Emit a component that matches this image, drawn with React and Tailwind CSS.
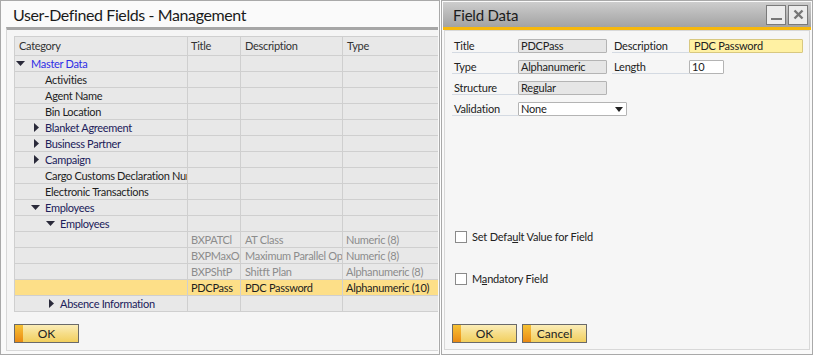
import React from "react";

const F = { fontFamily: "Lato, 'Liberation Sans', sans-serif" };

function TriDown() {
  return (
    <svg width="9" height="5" viewBox="0 0 9 5" className="block">
      <path d="M0 0 H9 L4.5 5 Z" fill="#2a2a3a" />
    </svg>
  );
}
function TriRight() {
  return (
    <svg width="5" height="9" viewBox="0 0 5 9" className="block">
      <path d="M0 0 V9 L5 4.5 Z" fill="#2a2a3a" />
    </svg>
  );
}

const rows = [
  { iconAt: 2, textAt: 17, icon: "down", text: "Master Data", color: "text-[#2d2de6]" },
  { textAt: 31, text: "Activities" },
  { textAt: 31, text: "Agent Name" },
  { textAt: 31, text: "Bin Location" },
  { iconAt: 20, textAt: 31, icon: "right", text: "Blanket Agreement", color: "text-[#20205a]" },
  { iconAt: 20, textAt: 31, icon: "right", text: "Business Partner", color: "text-[#20205a]" },
  { iconAt: 20, textAt: 31, icon: "right", text: "Campaign", color: "text-[#20205a]" },
  { textAt: 31, text: "Cargo Customs Declaration Numbers" },
  { textAt: 31, text: "Electronic Transactions" },
  { iconAt: 17, textAt: 31, icon: "down", text: "Employees", color: "text-[#20205a]" },
  { iconAt: 32, textAt: 46, icon: "down", text: "Employees", color: "text-[#20205a]" },
  { t: "BXPATCl", d: "AT Class", ty: "Numeric (8)", gray: true },
  { t: "BXPMaxOp", d: "Maximum Parallel Operations", ty: "Numeric (8)", gray: true },
  { t: "BXPShtP", d: "Shitft Plan", ty: "Alphanumeric (8)", gray: true },
  { t: "PDCPass", d: "PDC Password", ty: "Alphanumeric (10)", sel: true },
  { iconAt: 35, textAt: 46, icon: "right", text: "Absence Information", color: "text-[#20205a]" },
];

function Cell({ children, className = "" }) {
  return (
    <div className={`h-[16px] border-r border-b border-[#cfcfcf] overflow-hidden whitespace-nowrap leading-[15px] ${className}`}>
      {children}
    </div>
  );
}

function Button({ label }) {
  return (
    <div className="relative w-[65px] h-[19px] border border-[#6a6a6a] bg-gradient-to-b from-[#fbedb8] via-[#f6dd88] to-[#f2cf5c] flex items-center justify-center text-[12px] text-[#222]">
      <div className="absolute left-0 top-0 bottom-0 w-[8px] bg-gradient-to-b from-[#f6c235] to-[#ea8a12]" />
      <span className="relative">{label}</span>
    </div>
  );
}

function Label({ children, w }) {
  return (
    <div className={`h-[14px] border-b border-[#d4dae2] text-[11px] leading-[13px] text-[#222] pl-[2px] tracking-[-0.2px] ${w}`}>{children}</div>
  );
}

function Field({ children, className = "" }) {
  return (
    <div className={`h-[14px] border rounded-[1px] text-[11px] leading-[12px] pl-[2px] text-[#222] tracking-[-0.2px] ${className}`}>{children}</div>
  );
}

function Checkbox({ children }) {
  return (
    <div className="flex items-center gap-[5px] text-[11px] leading-[14px] text-[#222] tracking-[-0.2px]">
      <div className="w-[12px] h-[12px] border border-[#8a8a8a] bg-white" />
      <span>{children}</span>
    </div>
  );
}

export default function App() {
  return (
    <div style={F} className="w-[816px] h-[357px] bg-white flex items-start overflow-hidden">
      {/* Left window */}
      <div className="w-[440px] h-[355px] border border-[#a9a9a9] bg-[#fafafa] flex flex-col">
        <div className="h-[26px] pl-[12px] pt-[4px] text-[16px] leading-[20px] tracking-[-0.4px] text-[#1a1a1a]">User-Defined Fields - Management</div>
        <div className="ml-[5px] mr-[1px] mb-[3px] flex-1 border-t-[3px] border-t-[#a6a6a6] border-l border-b border-[#d8d8d8] bg-[#f5f5f5] pl-[7px] pt-[6px] flex flex-col overflow-hidden">
          <div className="w-[440px] border-t border-l border-[#cfcfcf] bg-[#e8e8e8] text-[11px] tracking-[-0.3px] text-[#1e1e1e]">
            <div className="grid grid-cols-[173px_53px_102px_112px] h-[19px]">
              <div className="border-r border-b border-[#cfcfcf] pl-[4px] leading-[17px] text-[#333]">Category</div>
              <div className="border-r border-b border-[#cfcfcf] pl-[3px] leading-[17px] text-[#333]">Title</div>
              <div className="border-r border-b border-[#cfcfcf] pl-[4px] leading-[17px] text-[#333]">Description</div>
              <div className="border-r border-b border-[#cfcfcf] pl-[4px] leading-[17px] text-[#333]">Type</div>
            </div>
            {rows.map((r, i) => (
              <div key={i} className={`grid grid-cols-[173px_53px_102px_112px] ${r.sel ? "bg-[#fddf88]" : ""}`}>
                <Cell className={`flex items-center ${r.color || ""}`}>
                  {r.text && (
                    <>
                      <div style={{ width: r.textAt - 1, paddingLeft: r.icon ? r.iconAt - 1 : 0 }} className="shrink-0 flex items-center">
                        {r.icon === "down" && <TriDown />}
                        {r.icon === "right" && <TriRight />}
                      </div>
                      <span>{r.text}</span>
                    </>
                  )}
                </Cell>
                <Cell className={`pl-[3px] ${r.gray ? "text-[#8c8c8c]" : ""}`}>{r.t}</Cell>
                <Cell className={`pl-[4px] ${r.gray ? "text-[#8c8c8c]" : ""}`}>{r.d}</Cell>
                <Cell className={`pl-[3px] ${r.gray ? "text-[#8c8c8c]" : ""}`}>{r.ty}</Cell>
              </div>
            ))}
          </div>
          <div className="mt-[12px]">
            <Button label="OK" />
          </div>
        </div>
      </div>

      {/* Right window */}
      <div className="ml-[1px] w-[372px] h-[355px] border border-[#a9a9a9] bg-[#fafafa] p-[1px] flex flex-col">
        <div className="h-[25px] bg-gradient-to-b from-[#cdcdcd] to-[#a3a3a3] flex items-center justify-between pl-[10px] pr-[3px]">
          <span className="text-[15px] text-[#1c1c1c] leading-[20px] tracking-[-0.2px]">Field Data</span>
          <div className="flex gap-[2px]">
            <div className="w-[20px] h-[20px] border border-[#7a7a7a] bg-[#ececec] flex items-end justify-center pb-[4px]">
              <div className="w-[11px] h-[2px] bg-[#777]" />
            </div>
            <div className="w-[20px] h-[20px] border border-[#7a7a7a] bg-[#ececec] flex items-center justify-center">
              <svg width="11" height="11" viewBox="0 0 11 11">
                <path d="M1.5 1.5 L9.5 9.5 M9.5 1.5 L1.5 9.5" stroke="#777" strokeWidth="2.4" />
              </svg>
            </div>
          </div>
        </div>
        <div className="h-[3px] bg-[#f6b80c]" />
        <div className="flex-1 mx-[1px] mb-[3px] border border-[#d8d8d8] bg-[#f6f6f6] flex flex-col pl-[7px] pt-[8px]">
          <div className="flex flex-col gap-[7px]">
            <div className="flex items-end">
              <Label w="w-[66px]">Title</Label>
              <Field className="w-[89px] bg-[#e6e6e6] border-[#b4b4b4]">PDCPass</Field>
              <div className="w-[5px]" />
              <Label w="w-[77px]">Description</Label>
              <Field className="w-[114px] bg-[#fff1a3] border-[#d8c880] pl-[4px]">PDC Password</Field>
            </div>
            <div className="flex items-end">
              <Label w="w-[66px]">Type</Label>
              <Field className="w-[89px] bg-[#e6e6e6] border-[#b4b4b4]">Alphanumeric</Field>
              <div className="w-[5px]" />
              <Label w="w-[77px]">Length</Label>
              <Field className="w-[35px] bg-white border-[#b4b4b4]">10</Field>
            </div>
            <div className="flex items-end">
              <Label w="w-[66px]">Structure</Label>
              <Field className="w-[89px] bg-[#e6e6e6] border-[#b4b4b4]">Regular</Field>
            </div>
            <div className="flex items-end">
              <Label w="w-[66px]">Validation</Label>
              <Field className="w-[109px] bg-white border-[#b4b4b4] flex items-center justify-between pr-[3px]">
                <span>None</span>
                <svg width="8" height="5" viewBox="0 0 8 5"><path d="M0 0 H8 L4 5 Z" fill="#222" /></svg>
              </Field>
            </div>
          </div>
          <div className="mt-[114px] pl-[3px] flex flex-col gap-[28px]">
            <Checkbox>Set Defa<span className="underline">u</span>lt Value for Field</Checkbox>
            <Checkbox>M<span className="underline">a</span>ndatory Field</Checkbox>
          </div>
          <div className="mt-[38px] flex gap-[5px]">
            <Button label="OK" />
            <Button label="Cancel" />
          </div>
        </div>
      </div>
    </div>
  );
}
